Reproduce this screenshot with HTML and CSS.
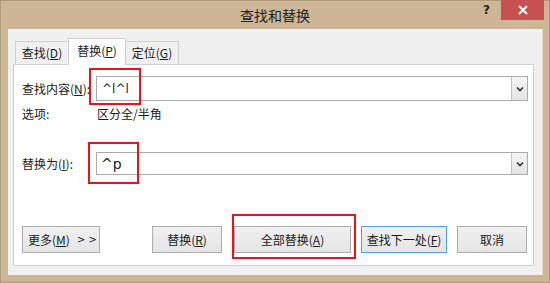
FILE: index.html
```html
<!DOCTYPE html>
<html lang="zh">
<head>
<meta charset="utf-8">
<link rel="stylesheet" href="styles.css">
</head>
<body>
<div class="win">
  <div class="titlebar">
    <div class="title">查找和替换</div>
    <div class="help">?</div>
    <div class="close"><svg width="10" height="10" viewBox="0 0 10 10"><path d="M1 1L9 9M9 1L1 9" stroke="#fff" stroke-width="2"/></svg></div>
  </div>
  <div class="client">
    <div class="tabs">
      <div class="tab">查找(<u>D</u>)</div>
      <div class="tab active">替换(<u>P</u>)</div>
      <div class="tab">定位(<u>G</u>)</div>
    </div>
    <div class="panel">
      <div class="row r1">
        <div class="label">查找内容(<u>N</u>):</div>
        <div class="combo tall"><span class="val">^l^l</span><span class="drop"><svg width="8" height="6" viewBox="0 0 8 6"><path d="M1 1.5L4 4.5L7 1.5" fill="none" stroke="#333" stroke-width="1.6"/></svg></span></div>
      </div>
      <div class="row r2">
        <div class="label">选项:</div>
        <div class="opt">区分全/半角</div>
      </div>
      <div class="row r3">
        <div class="label">替换为(<u>I</u>):</div>
        <div class="combo"><span class="val big">^p</span><span class="drop"><svg width="8" height="6" viewBox="0 0 8 6"><path d="M1 1.5L4 4.5L7 1.5" fill="none" stroke="#333" stroke-width="1.6"/></svg></span></div>
      </div>
      <div class="btns">
        <div class="btn more">更多(<u>M</u>)<span class="arrows">&gt; &gt;</span></div>
        <div class="btn replace">替换(<u>R</u>)</div>
        <div class="btn all">全部替换(<u>A</u>)</div>
        <div class="btn next">查找下一处(<u>F</u>)</div>
        <div class="btn cancel">取消</div>
      </div>
      <div class="mark m1"></div>
      <div class="mark m2"></div>
      <div class="mark m3"></div>
    </div>
  </div>
</div>
</body>
</html>
```
FILE: styles.css
```css
html, body {
  margin: 0;
  padding: 0;
}
body {
  width: 550px;
  height: 283px;
  background: #cdb696;
  font-family: "Noto Sans CJK SC", "Microsoft YaHei", sans-serif;
  font-size: 12px;
  color: #1a1a1a;
  overflow: hidden;
}
u {
  text-decoration: underline;
  text-underline-offset: 1px;
}
.win {
  width: 550px;
  height: 283px;
  box-sizing: border-box;
  border: 1px solid #b09a7c;
}
.titlebar {
  height: 28px;
  position: relative;
  display: flex;
  justify-content: center;
}
.title {
  font-size: 14px;
  line-height: 28px;
  color: #222;
}
.help {
  position: absolute;
  left: 482px;
  top: 2px;
  font-family: "DejaVu Sans", sans-serif;
  font-weight: bold;
  font-size: 12px;
  color: #222;
}
.close {
  position: absolute;
  left: 500px;
  top: -1px;
  width: 43px;
  height: 20px;
  background: #c75050;
  display: flex;
  align-items: center;
  justify-content: center;
}
.client {
  margin-left: 7px;
  width: 535px;
  height: 246px;
  background: #f0f0f0;
  border-right: 1px solid #e6dccb;
  box-sizing: border-box;
  padding: 9px 0 0 5px;
}
.tabs {
  display: flex;
  align-items: flex-end;
  height: 26px;
  padding-left: 2px;
  position: relative;
  z-index: 2;
}
.tab {
  height: 23px;
  box-sizing: border-box;
  border: 1px solid #d0d0d0;
  border-bottom: none;
  background: #f0f0f0;
  padding: 0;
  white-space: nowrap;
  line-height: 21px;
  margin-right: -1px;
  width: 54px;
  text-align: center;
}
.tab.active {
  height: 27px;
  background: #fff;
  margin-bottom: -1px;
  width: 58px;
  line-height: 24px;
  position: relative;
  z-index: 3;
}
.panel {
  position: relative;
  width: 521px;
  height: 202px;
  box-sizing: border-box;
  border: 1px solid #d0d0d0;
  background: #fff;
  padding: 11px 5px 0 8px;
}
.row {
  display: flex;
  align-items: center;
}
.label {
  width: 74px;
  flex: none;
  white-space: nowrap;
}
.r1 { height: 25px; }
.r2 { height: 14px; margin-top: 5px; }
.r3 { height: 23px; margin-top: 32px; }
.opt { padding-left: 1px; }
.combo {
  flex: 1;
  height: 100%;
  box-sizing: border-box;
  border: 1px solid #ababab;
  display: flex;
  align-items: center;
  justify-content: space-between;
}
.val {
  padding-left: 5px;
  font-family: "DejaVu Sans", sans-serif;
  font-size: 12px;
}
.val.big {
  font-size: 14px;
  padding-left: 4px;
}
.drop {
  width: 16px;
  height: 100%;
  box-sizing: border-box;
  border-left: 1px solid #c4c4c4;
  background: linear-gradient(#f4f4f4, #e4e4e4);
  display: flex;
  align-items: center;
  justify-content: center;
}
.btns {
  display: flex;
  margin-top: 51px;
  height: 27px;
}
.btn {
  box-sizing: border-box;
  height: 27px;
  border: 1px solid #acacac;
  background: linear-gradient(#f0f0f0, #e5e5e5);
  display: flex;
  align-items: center;
  justify-content: center;
  font-size: 12px;
  white-space: nowrap;
}
.more { width: 78px; justify-content: flex-start; padding-left: 5px; }
.arrows { margin-left: 7px; font-size: 10px; font-family: "DejaVu Sans", sans-serif; }
.replace { width: 70px; margin-left: 52px; }
.all { width: 117px; margin-left: 12px; }
.next { width: 86px; margin-left: 10px; border-color: #4aa3e8; }
.cancel { width: 70px; margin-left: 10px; }
.mark {
  position: absolute;
  border: 2px solid #e8141b;
  box-sizing: border-box;
}
.m1 { left: 75px; top: 3px; width: 52px; height: 37px; }
.m2 { left: 74px; top: 77px; width: 51px; height: 42px; }
.m3 { left: 218px; top: 149px; width: 124px; height: 45px; }
```
